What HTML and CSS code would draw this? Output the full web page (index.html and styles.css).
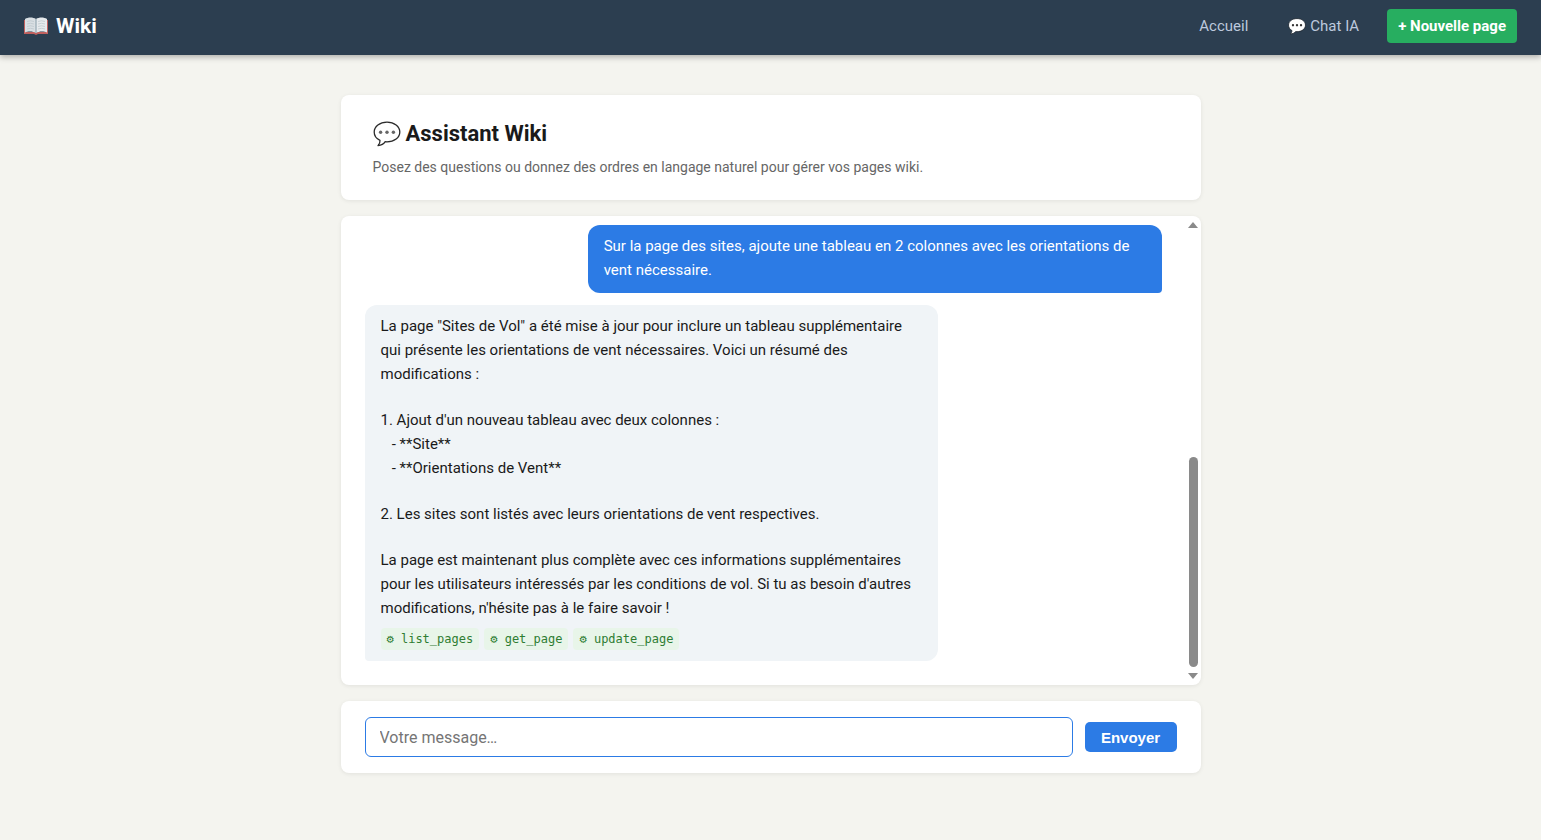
FILE: index.html
```html
<!DOCTYPE html>
<html lang="fr">
<head>
  <meta charset="UTF-8">
  <meta name="viewport" content="width=device-width, initial-scale=1.0">
  <title>Assistant Wiki</title>
  <link rel="stylesheet" href="styles.css">
</head>
<body>

<header class="navbar">
  <a class="brand" href="#">
    <svg class="icon-book" viewBox="0 0 24 18" aria-hidden="true">
      <path d="M0 3h2v12h20V3h2v14H14l-2 1-2-1H0z" fill="#c0605e"/>
      <path d="M1 2C4 0 9 0 12 2v14c-3-2-8-2-11-.5z" fill="#d9dfe3"/>
      <path d="M23 2c-3-2-8-2-11 0v14c3-2 8-2 11-.5z" fill="#e6eaed"/>
      <path d="M12 2v14" stroke="#9fb0b9" stroke-width="1.4"/>
      <path d="M3 4.500q3.500-1.500 7 0M3 7q3.500-1.500 7 0M3 9.500q3.500-1.500 7 0M3 12q3.500-1.500 7 0M14 4.500q3.500-1.500 7 0M14 7q3.500-1.500 7 0M14 9.500q3.500-1.500 7 0M14 12q3.500-1.500 7 0" fill="none" stroke="#b9c4ca" stroke-width=".7"/>
    </svg>
    Wiki
  </a>
  <nav class="nav-links">
    <a href="#">Accueil</a>
    <a href="#">
      <svg class="icon-chat" viewBox="0.500 0.500 17 16" aria-hidden="true">
        <path d="M9 1C4.300 1 1 3.700 1 7.200c0 2.200 1.200 4 3.200 5.100.1 1.300-.5 2.300-1.500 3.200 2.300 0 4-.9 5-2.200l1.300.1c4.700 0 8-2.700 8-6.200S13.700 1 9 1z" fill="#fff" stroke="#1c252e" stroke-width=".8"/>
        <circle cx="5.200" cy="7.300" r="1.100" fill="#333"/>
        <circle cx="9" cy="7.300" r="1.100" fill="#333"/>
        <circle cx="12.800" cy="7.300" r="1.100" fill="#333"/>
      </svg>
      Chat IA
    </a>
    <a class="btn-new" href="#">+ Nouvelle page</a>
  </nav>
</header>

<main class="container">

  <!-- En-tête -->
  <section class="card intro">
    <h1>
      <svg class="icon-title" viewBox="0 0 28 26" aria-hidden="true">
        <path d="M14 1.200C6.700 1.200 1.200 5.300 1.200 11c0 3.600 2.200 6.700 5.800 8.400.2 2-.6 3.700-2 5.200 3.200-.3 5.800-1.700 7.200-3.900l1.800.1c7.300 0 12.800-4.100 12.800-9.800S21.300 1.200 14 1.200z" fill="#fff" stroke="#2b2b2b" stroke-width="1.300" stroke-linejoin="round"/>
        <circle cx="7.600" cy="11.300" r="1.700" fill="#666"/>
        <circle cx="14" cy="11.300" r="1.700" fill="#666"/>
        <circle cx="20.400" cy="11.300" r="1.700" fill="#666"/>
      </svg>
      Assistant Wiki
    </h1>
    <p>Posez des questions ou donnez des ordres en langage naturel pour gérer vos pages wiki.</p>
  </section>

  <!-- Conversation -->
  <section class="card chat">
    <div class="messages">
      <div class="message user">
        <p>Sur la page des sites, ajoute une tableau en 2 colonnes avec les orientations de vent nécessaire.</p>
      </div>
      <div class="message assistant">
        <p>La page "Sites de Vol" a été mise à jour pour inclure un tableau supplémentaire qui présente les orientations de vent nécessaires. Voici un résumé des modifications :</p>
        <p>1. Ajout d'un nouveau tableau avec deux colonnes :
   - **Site**
   - **Orientations de Vent**</p>
        <p>2. Les sites sont listés avec leurs orientations de vent respectives.</p>
        <p>La page est maintenant plus complète avec ces informations supplémentaires pour les utilisateurs intéressés par les conditions de vol. Si tu as besoin d'autres modifications, n'hésite pas à le faire savoir !</p>
        <div class="tools">
          <span class="tool">⚙ list_pages</span>
          <span class="tool">⚙ get_page</span>
          <span class="tool">⚙ update_page</span>
        </div>
      </div>
    </div>
    <div class="scrollbar" aria-hidden="true">
      <span class="arrow up"></span>
      <span class="track-space"></span>
      <span class="thumb"></span>
      <span class="arrow down"></span>
    </div>
  </section>

  <!-- Saisie -->
  <form class="card composer">
    <input type="text" placeholder="Votre message…" aria-label="Votre message">
    <button type="button">Envoyer</button>
  </form>

</main>

</body>
</html>
```
FILE: styles.css
```css
* { box-sizing: border-box; margin: 0; padding: 0; }
body {
  font-family: Roboto, "Liberation Sans", sans-serif;
  background: #f4f4ef;
  color: #1a1a1a;
  font-size: 15px;
  line-height: 24px;
}
.navbar {
  display: flex;
  align-items: center;
  justify-content: space-between;
  padding: 9px 24px 12px;
  background: #2c3e50;
  box-shadow: 0 2px 6px rgba(0, 0, 0, 0.3);
}
.brand {
  display: flex;
  align-items: center;
  gap: 8px;
  color: #fff;
  font-size: 21px;
  font-weight: bold;
  text-decoration: none;
}
.icon-book { width: 24px; height: 18px; }
.nav-links {
  display: flex;
  align-items: center;
  gap: 16px;
}
.nav-links a {
  display: flex;
  align-items: center;
  gap: 4px;
  padding: 5px 12px;
  border-radius: 4px;
  color: #bdc9dd;
  font-size: 15px;
  text-decoration: none;
}
.icon-chat { width: 18px; height: 17px; }
.nav-links .btn-new {
  padding: 5px 11px;
  background: #27ae60;
  color: #fff;
  font-weight: bold;
}
.container {
  display: flex;
  flex-direction: column;
  gap: 16px;
  max-width: 860px;
  margin: 40px auto;
}
.card {
  background: #fff;
  border-radius: 8px;
  box-shadow: 0 1px 4px rgba(0, 0, 0, 0.08);
}
.intro { padding: 24px 32px 21px; }
.intro h1 {
  display: flex;
  align-items: center;
  gap: 5px;
  margin-bottom: 6px;
  font-size: 22px;
  line-height: 30px;
}
.icon-title { width: 28px; height: 26px; }
.intro p {
  color: #666;
  font-size: 14px;
}
.chat {
  display: flex;
  overflow: hidden;
}
.messages {
  flex: 1;
  display: flex;
  flex-direction: column;
  gap: 12px;
  padding: 9px 24px 24px;
}
.message {
  max-width: 72%;
  padding: 9px 16px 11px;
  border-radius: 12px;
}
.message p { white-space: pre-wrap; }
.message p + p { margin-top: 22px; }
.user {
  align-self: flex-end;
  background: #2c7be5;
  color: #fff;
  border-bottom-right-radius: 4px;
}
.assistant {
  align-self: flex-start;
  background: #f0f4f7;
  border-bottom-left-radius: 4px;
}
.tools {
  display: flex;
  flex-wrap: wrap;
  gap: 5px;
  margin-top: 8px;
}
.tool {
  padding: 0 6px;
  border-radius: 4px;
  background: #e8f5e9;
  color: #2e7d32;
  font-family: "DejaVu Sans Mono", monospace;
  font-size: 12px;
  line-height: 22px;
}
.scrollbar {
  display: flex;
  flex-direction: column;
  align-items: center;
  width: 15px;
  padding: 6px 0;
}
.arrow {
  border: 5px solid transparent;
}
.up {
  border-top: 0;
  border-bottom: 6px solid #8a8a8a;
}
.down {
  margin-top: 6px;
  border-bottom: 0;
  border-top: 6px solid #8a8a8a;
}
.track-space { flex: 229; }
.thumb {
  flex: 210;
  width: 9px;
  border-radius: 5px;
  background: #8a8a8a;
}
.composer {
  display: flex;
  align-items: center;
  gap: 12px;
  padding: 16px 24px;
}
.composer input {
  flex: 1;
  min-width: 0;
  height: 40px;
  padding: 0 14px;
  border: 1px solid #2c7be5;
  border-radius: 6px;
  outline: none;
  font-family: inherit;
  font-size: 16px;
}
.composer input::placeholder { color: #757575; }
.composer button {
  width: 92px;
  height: 30px;
  border: none;
  border-radius: 5px;
  background: #2c7be5;
  color: #fff;
  font-family: "Liberation Sans", Arial, sans-serif;
  font-size: 15px;
  font-weight: bold;
  cursor: pointer;
}
```
